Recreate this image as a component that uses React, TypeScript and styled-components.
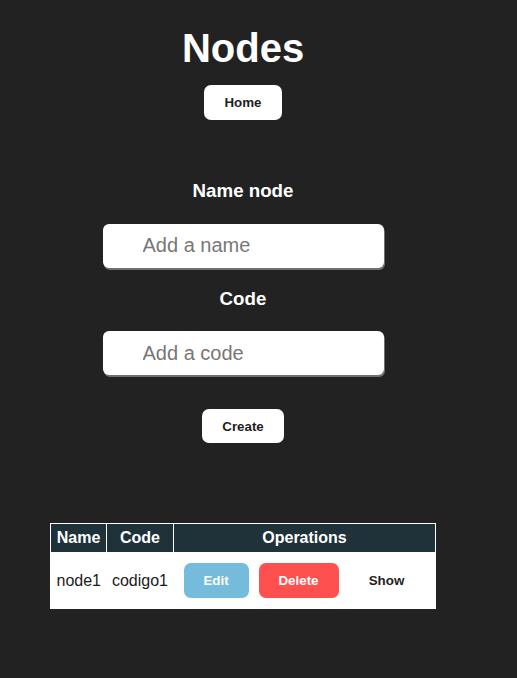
import React from "react";
import styled, { createGlobalStyle } from "styled-components";

const GlobalStyle = createGlobalStyle`
  html, body {
    margin: 0;
    padding: 0;
    background: #222222;
    font-family: "Liberation Sans", Arial, sans-serif;
  }
`;

const Page = styled.div`
  width: 486px;
  display: flex;
  flex-direction: column;
  align-items: center;
  color: #ffffff;
`;

const Title = styled.h1`
  margin: 25px 0 14px;
  font-size: 40px;
  line-height: 46px;
  font-weight: 700;
`;

const WhiteButton = styled.button<{ $w: number; $h: number }>`
  width: ${(p) => p.$w}px;
  height: ${(p) => p.$h}px;
  border: none;
  border-radius: 7px;
  background: #ffffff;
  color: #1e1e1e;
  font-family: "Liberation Sans", Arial, sans-serif;
  font-size: 13.33px;
  font-weight: 700;
  padding: 0;
  cursor: pointer;
`;

const Form = styled.form`
  display: flex;
  flex-direction: column;
  align-items: center;
  margin-top: 60px;
`;

const Label = styled.h3<{ $top: number }>`
  margin: ${(p) => p.$top}px 0 22px;
  font-size: 18.72px;
  line-height: 21.5px;
  font-weight: 700;
`;

const Field = styled.input`
  box-sizing: border-box;
  width: 281px;
  height: 44px;
  border: none;
  border-radius: 6px;
  box-shadow: 1px 2px 0 #707070;
  background: #ffffff;
  padding: 0 0 0 40px;
  font-family: "Liberation Sans", Arial, sans-serif;
  font-size: 20px;
  color: #222;
  outline: none;

  &::placeholder {
    color: #777777;
  }
`;

const CreateWrap = styled.div`
  margin-top: 34px;
`;

const Table = styled.table`
  margin-top: 80px;
  border-collapse: collapse;
  table-layout: fixed;
  width: 385px;
  border: 1px solid #ffffff;
  background: #ffffff;
  font-size: 16px;
`;

const Head = styled.th`
  background: #1f3239;
  color: #ffffff;
  border: 1px solid #ffffff;
  font-weight: 700;
  padding: 5px 0 5px;
  line-height: 18px;
  text-align: center;
`;

const Cell = styled.td`
  color: #1a1a1a;
  padding: 10px 0 10px;
  text-align: center;
  line-height: 18px;
`;

const Ops = styled.div`
  display: flex;
  gap: 10px;
  padding-left: 10px;
`;

const OpButton = styled.button<{ $bg: string; $w: number }>`
  width: ${(p) => p.$w}px;
  height: 35px;
  border: none;
  border-radius: 7px;
  background: ${(p) => p.$bg};
  color: ${(p) => (p.$bg === "#ffffff" ? "#1e1e1e" : "#ffffff")};
  font-family: "Liberation Sans", Arial, sans-serif;
  font-size: 13.33px;
  font-weight: 700;
  padding: 0;
  cursor: pointer;
`;

const nodes = [{ name: "node1", code: "codigo1" }];

export default function App() {
  return (
    <>
      <GlobalStyle />
      <Page>
        <Title>Nodes</Title>
        <WhiteButton $w={78} $h={35}>Home</WhiteButton>
        <Form onSubmit={(e) => e.preventDefault()}>
          <Label $top={0}>Name node</Label>
          <Field placeholder="Add a name" />
          <Label $top={20}>Code</Label>
          <Field placeholder="Add a code" />
          <CreateWrap>
            <WhiteButton $w={82} $h={34}>Create</WhiteButton>
          </CreateWrap>
        </Form>
        <Table>
          <colgroup>
            <col style={{ width: 56 }} />
            <col style={{ width: 67 }} />
            <col style={{ width: 262 }} />
          </colgroup>
          <thead>
            <tr>
              <Head>Name</Head>
              <Head>Code</Head>
              <Head>Operations</Head>
            </tr>
          </thead>
          <tbody>
            {nodes.map((n) => (
              <tr key={n.code}>
                <Cell>{n.name}</Cell>
                <Cell>{n.code}</Cell>
                <Cell>
                  <Ops>
                    <OpButton $bg="#74bbdc" $w={65}>Edit</OpButton>
                    <OpButton $bg="#ff5050" $w={80}>Delete</OpButton>
                    <OpButton $bg="#ffffff" $w={76}>Show</OpButton>
                  </Ops>
                </Cell>
              </tr>
            ))}
          </tbody>
        </Table>
      </Page>
    </>
  );
}
